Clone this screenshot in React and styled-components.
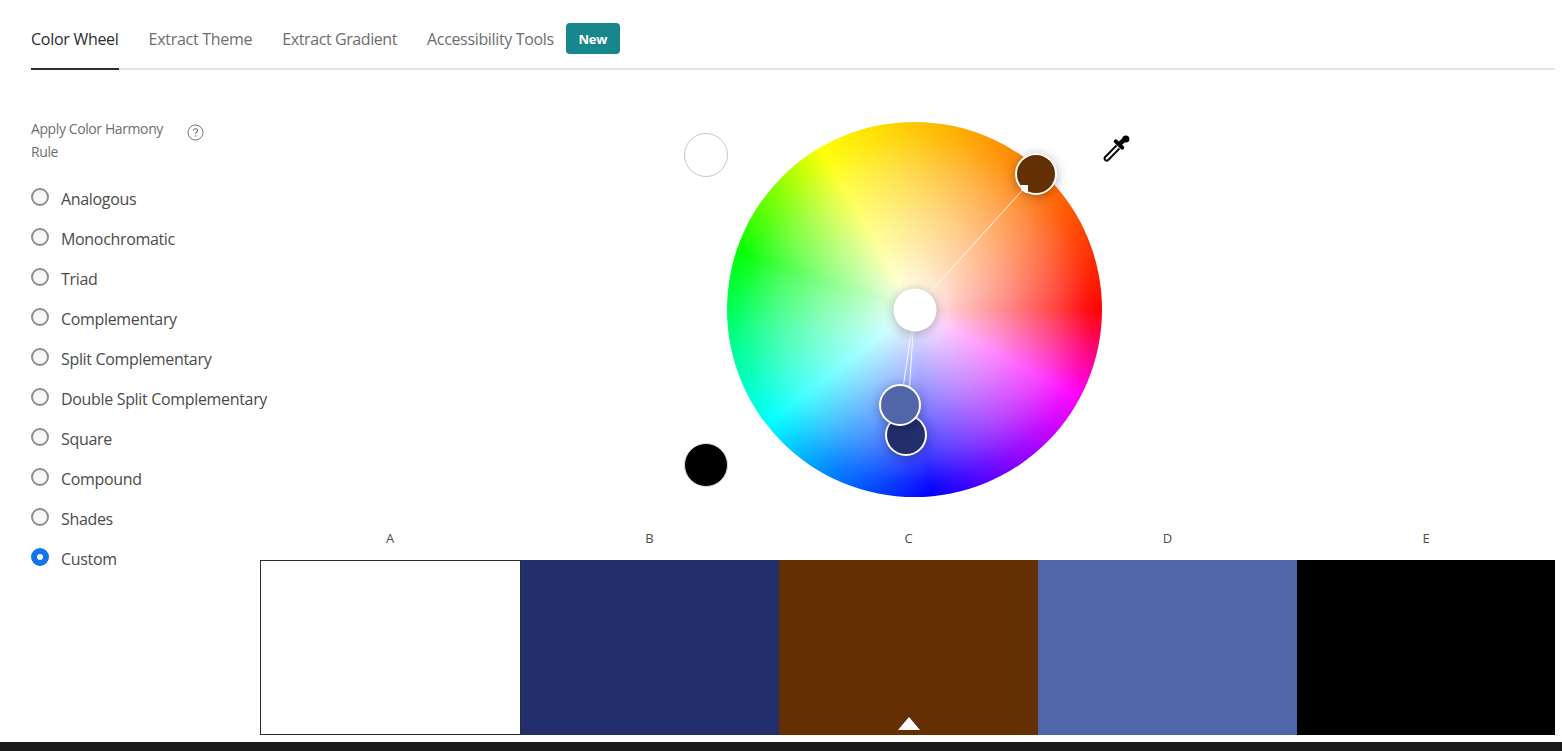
import React from "react";
import styled, { createGlobalStyle } from "styled-components";

const Global = createGlobalStyle`
  html, body { margin: 0; padding: 0; background: #fff; }
  body { font-family: "Open Sans", "Liberation Sans", sans-serif; overflow: hidden; }
`;

const Page = styled.div`
  width: 1562px;
  height: 751px;
  display: flex;
  flex-direction: column;
  background: #fff;
  overflow: hidden;
`;

const TabBar = styled.nav`
  height: 68px;
  margin: 0 7px 0 31px;
  border-bottom: 2px solid #e6e6e6;
  display: flex;
  align-items: flex-start;
  gap: 30px;
  flex: none;
`;

const Tab = styled.div`
  height: 70px;
  box-sizing: border-box;
  padding-top: 28px;
  font-size: 16px;
  line-height: 22px;
  letter-spacing: ${(p) => p.$tracking}px;
  white-space: nowrap;
  color: ${(p) => (p.$active ? "#2c2c2c" : "#6e6e6e")};
  border-bottom: 2px solid ${(p) => (p.$active ? "#2c2c2c" : "transparent")};
`;

const NewBadge = styled.div`
  width: 54px;
  height: 31px;
  margin: 23px 0 0 -18px;
  border-radius: 4px;
  background: #18878b;
  color: #fff;
  font-size: 13px;
  font-weight: 700;
  letter-spacing: -0.3px;
  display: flex;
  align-items: center;
  justify-content: center;
`;

const Main = styled.div`
  flex: 1;
  display: flex;
  min-height: 0;
`;

const Sidebar = styled.aside`
  width: 229px;
  padding: 47px 0 0 31px;
  flex: none;
`;

const HeadingRow = styled.div`
  display: flex;
  align-items: flex-start;
  gap: 16px;
  margin-bottom: 16px;
`;

const Heading = styled.div`
  width: 140px;
  font-size: 14px;
  line-height: 23px;
  letter-spacing: -0.4px;
  color: #6e6e6e;
`;

const HelpIcon = styled.svg`
  width: 17px;
  height: 17px;
  margin-top: 7px;
  flex: none;
`;

const RadioList = styled.div`
  display: flex;
  flex-direction: column;
`;

const RadioRow = styled.div`
  height: 40px;
  display: flex;
  align-items: center;
  gap: 12px;
  white-space: nowrap;
  font-size: 16px;
  letter-spacing: -0.33px;
  color: #4b4b4b;
`;

const RadioDot = styled.span`
  width: 18px;
  height: 18px;
  box-sizing: border-box;
  border-radius: 50%;
  flex: none;
  position: relative;
  top: -2px;
  background: ${(p) => (p.$checked ? "#fff" : "#f8f8f8")};
  border: ${(p) => (p.$checked ? "6px solid #1473e6" : "2px solid #8e8e8e")};
`;

const Content = styled.section`
  flex: 1;
  margin-right: 7px;
  display: flex;
  flex-direction: column;
`;

const Stage = styled.div`
  height: 452px;
  flex: none;
  padding: 52px 0 0 467px;
  box-sizing: border-box;
`;

const Wheel = styled.div`
  position: relative;
  width: 375px;
  height: 375px;
  border-radius: 50%;
  background:
    radial-gradient(closest-side, #fff 0%, rgba(255,255,255,0.74) 25%, rgba(255,255,255,0.52) 50%, rgba(255,255,255,0.27) 75%, rgba(255,255,255,0.06) 92%, rgba(255,255,255,0) 100%),
    conic-gradient(from 0deg,
      #ffc800 0deg, #ff9000 29deg, #ff6a00 49deg, #ff3a00 68deg, #ff0000 90deg,
      #ff00ff 118deg, #8000ff 148deg, #0000ff 175deg, #0080ff 207deg,
      #00ffff 232deg, #00ff80 262deg, #00ff00 288deg, #80ff00 310deg,
      #ffff00 330deg, #ffc800 360deg);
`;

const Links = styled.svg`
  position: absolute;
  left: 0;
  top: 0;
  width: 375px;
  height: 375px;
  overflow: visible;
`;

const Marker = styled.div`
  position: absolute;
  left: ${(p) => p.$x}px;
  top: ${(p) => p.$y}px;
  width: ${(p) => p.$size}px;
  height: ${(p) => p.$size}px;
  box-sizing: border-box;
  transform: translate(-50%, -50%);
  border-radius: 50%;
  background: ${(p) => p.$color};
  border: ${(p) => p.$border};
  box-shadow: ${(p) => p.$shadow || "none"};
`;

const Notch = styled.span`
  position: absolute;
  left: 4px;
  top: 30px;
  width: 7px;
  height: 8px;
  background: #fff;
  clip-path: polygon(0 0, 100% 0, 100% 100%, 64% 100%, 0 55%);
`;

const Dropper = styled.svg`
  position: absolute;
  left: 375px;
  top: 11px;
  width: 30px;
  height: 30px;
`;

const Labels = styled.div`
  display: grid;
  grid-template-columns: 260px 259px 259px 259px 258px;
  height: 38px;
  align-items: start;
  flex: none;
`;

const Label = styled.div`
  text-align: center;
  font-size: 13px;
  line-height: 18px;
  padding-top: 7px;
  color: #4b4b4b;
`;

const Swatches = styled.div`
  display: grid;
  grid-template-columns: 261px 258px 259px 259px 258px;
  height: 175px;
  flex: none;
`;

const Swatch = styled.div`
  position: relative;
  background: ${(p) => p.$color};
  box-sizing: border-box;
  border: ${(p) => (p.$outlined ? "1px solid #2c2c2c" : "none")};
`;

const Caret = styled.span`
  position: absolute;
  left: 50%;
  bottom: 5px;
  transform: translateX(-50%);
  width: 0;
  height: 0;
  border-left: 11.5px solid transparent;
  border-right: 11.5px solid transparent;
  border-bottom: 13px solid #fff;
`;

const Footer = styled.footer`
  height: 9px;
  background: #1a1a1a;
  flex: none;
`;

const tabs = [
  { label: "Color Wheel", tracking: -0.28 },
  { label: "Extract Theme", tracking: -0.28 },
  { label: "Extract Gradient", tracking: -0.41 },
  { label: "Accessibility Tools", tracking: -0.34 },
];
const rules = ["Analogous", "Monochromatic", "Triad", "Complementary", "Split Complementary", "Double Split Complementary", "Square", "Compound", "Shades", "Custom"];
const swatches = [
  { id: "A", color: "#ffffff", outlined: true },
  { id: "B", color: "#232f6c" },
  { id: "C", color: "#652f04", active: true },
  { id: "D", color: "#5066a8" },
  { id: "E", color: "#000000" },
];

const ox = 727;
const oy = 122;
const handleShadow = "0 2px 12px rgba(0,0,0,0.3)";

export default function App() {
  return (
    <Page>
      <Global />
      <TabBar>
        {tabs.map((t, i) => (
          <Tab key={t.label} $active={i === 0} $tracking={t.tracking}>{t.label}</Tab>
        ))}
        <NewBadge>New</NewBadge>
      </TabBar>
      <Main>
        <Sidebar>
          <HeadingRow>
            <Heading>Apply Color Harmony Rule</Heading>
            <HelpIcon viewBox="0 0 17 17" fill="none">
              <circle cx="8.5" cy="8.5" r="7.5" stroke="#707070" strokeWidth="1" />
              <path d="M6.3 6.6c.2-1.2 1.1-1.8 2.2-1.8 1.2 0 2.1.8 2.1 1.8 0 1.6-2.1 1.6-2.1 3.2" stroke="#707070" strokeWidth="1.1" />
              <circle cx="8.5" cy="12" r=".8" fill="#707070" />
            </HelpIcon>
          </HeadingRow>
          <RadioList>
            {rules.map((r) => (
              <RadioRow key={r}>
                <RadioDot $checked={r === "Custom"} />
                {r}
              </RadioRow>
            ))}
          </RadioList>
        </Sidebar>
        <Content>
          <Stage>
            <Wheel>
              <Links viewBox="0 0 375 375">
                <g stroke="#fff" strokeWidth="1" fill="none" opacity="0.9">
                  <line x1="187.5" y1="187.5" x2={1037 - ox} y2={174 - oy} />
                  <line x1="187.5" y1="187.5" x2={900.5 - ox} y2={405.5 - oy} />
                  <line x1="187.5" y1="187.5" x2={906.5 - ox} y2={435.5 - oy} />
                </g>
              </Links>
              <Marker $x={706 - ox} $y={155 - oy} $size={44} $color="#fff" $border="1.5px solid #c8c8c8" />
              <Marker $x={706 - ox} $y={465 - oy} $size={44} $color="#000" $border="1px solid #d8d8d8" />
              <Marker $x={187.5} $y={187.5} $size={43} $color="#fff" $border="none" $shadow={handleShadow} />
              <Marker $x={906 - ox} $y={435 - oy} $size={42} $color="#232f6c" $border="2px solid #fff" $shadow={handleShadow} />
              <Marker $x={900 - ox} $y={405 - oy} $size={42} $color="#5066a8" $border="2px solid #fff" $shadow={handleShadow} />
              <Marker $x={1036 - ox} $y={174 - oy} $size={42} $color="#652f04" $border="2px solid #fff" $shadow={handleShadow}>
                <Notch />
              </Marker>
              <Dropper viewBox="0 0 30 30" fill="none">
                <path d="M14.5 12.5 L3.2 24 a2.1 2.1 0 0 0 3 3 L17.5 15.5" stroke="#000" strokeWidth="1.8" strokeLinejoin="round" />
                <line x1="13.8" y1="8.3" x2="20.2" y2="14.7" stroke="#000" strokeWidth="4" strokeLinecap="round" />
                <line x1="17" y1="11.5" x2="23.5" y2="5.5" stroke="#000" strokeWidth="4.5" />
                <circle cx="23.8" cy="6" r="3.6" fill="#000" />
              </Dropper>
            </Wheel>
          </Stage>
          <Labels>
            {swatches.map((s) => (
              <Label key={s.id}>{s.id}</Label>
            ))}
          </Labels>
          <Swatches>
            {swatches.map((s) => (
              <Swatch key={s.id} $color={s.color} $outlined={s.outlined}>
                {s.active && <Caret />}
              </Swatch>
            ))}
          </Swatches>
        </Content>
      </Main>
      <Footer />
    </Page>
  );
}
